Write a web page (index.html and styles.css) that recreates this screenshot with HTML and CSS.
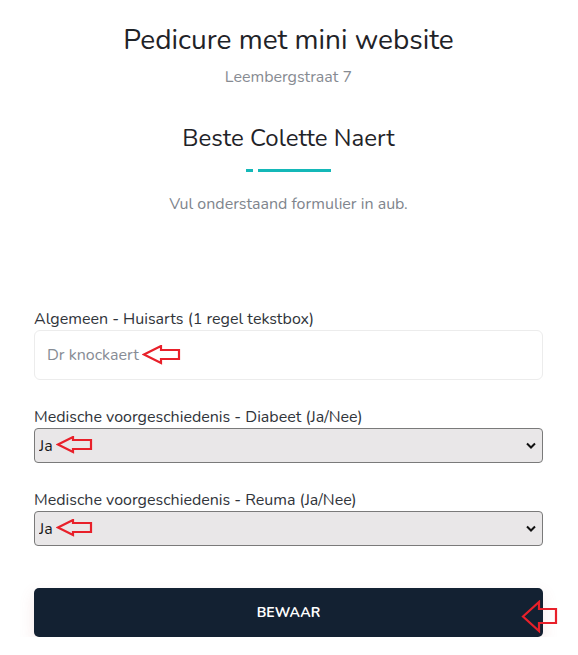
FILE: index.html
```html
<!DOCTYPE html>
<html lang="nl">
<head>
<meta charset="utf-8">
<title>Pedicure met mini website</title>
<link rel="stylesheet" href="styles.css">
</head>
<body>
<div class="page">
  <header class="head">
    <h1 class="title">Pedicure met mini website</h1>
    <p class="address">Leembergstraat 7</p>
    <h2 class="greet">Beste Colette Naert</h2>
    <div class="divider"><span class="dot"></span><span class="bar"></span></div>
    <p class="intro">Vul onderstaand formulier in aub.</p>
  </header>
  <form class="form">
    <div class="group">
      <label class="label" for="huisarts">Algemeen - Huisarts (1 regel tekstbox)</label>
      <div class="field">
        <input class="input" id="huisarts" type="text" placeholder="Dr knockaert">
        <svg class="arrow arrow-input" width="40" height="20" viewBox="0 0 40 20"><path d="M2 9.5 L19 1 L19 5 L37 5 L37 14 L19 14 L19 18 Z" fill="none" stroke="#e8202a" stroke-width="2.2"/></svg>
      </div>
    </div>
    <div class="group">
      <label class="label" for="diabeet">Medische voorgeschiedenis - Diabeet (Ja/Nee)</label>
      <div class="field">
        <select class="select" id="diabeet"><option>Ja</option><option>Nee</option></select>
        <svg class="arrow arrow-select" width="38" height="18" viewBox="0 0 38 18"><path d="M2 8.5 L17 1 L17 4 L35 4 L35 13 L17 13 L17 16 Z" fill="none" stroke="#e8202a" stroke-width="2.2"/></svg>
      </div>
    </div>
    <div class="group">
      <label class="label" for="reuma">Medische voorgeschiedenis - Reuma (Ja/Nee)</label>
      <div class="field">
        <select class="select" id="reuma"><option>Ja</option><option>Nee</option></select>
        <svg class="arrow arrow-select" width="38" height="18" viewBox="0 0 38 18"><path d="M2 8.5 L17 1 L17 4 L35 4 L35 13 L17 13 L17 16 Z" fill="none" stroke="#e8202a" stroke-width="2.2"/></svg>
      </div>
    </div>
    <div class="field submit">
      <button class="button" type="button">BEWAAR</button>
      <svg class="arrow arrow-button" width="38" height="34" viewBox="0 0 38 34"><path d="M2 16.5 L18 2 L18 9 L35 9 L35 23 L18 23 L18 31 Z" fill="none" stroke="#e8202a" stroke-width="2.2"/></svg>
    </div>
  </form>
</div>
</body>
</html>
```
FILE: styles.css
```css
* { box-sizing: border-box; }
html, body { margin: 0; padding: 0; background: #fff; }
body {
  font-family: "Nunito", "Lato", "Open Sans", sans-serif;
  font-size: 16px;
  color: #222;
}
.page {
  padding: 22px 35px 0 34px;
}
.head {
  text-align: center;
}
.title {
  margin: 0;
  font-size: 28px;
  font-weight: 400;
  line-height: 36px;
  color: #1f2328;
}
.address {
  margin: 9px 0 0;
  font-size: 16px;
  line-height: 20px;
  color: #878b92;
}
.greet {
  margin: 36px 0 0;
  font-size: 24px;
  font-weight: 400;
  line-height: 30px;
  color: #1f2328;
}
.divider {
  display: flex;
  justify-content: center;
  gap: 5px;
  margin-top: 16px;
  height: 3px;
}
.divider .dot { width: 7px; height: 3px; background: #14b8b8; }
.divider .bar { width: 73px; height: 3px; background: #14b8b8; }
.intro {
  margin: 22px 0 0;
  font-size: 16px;
  line-height: 20px;
  color: #80858d;
}
.form {
  margin-top: 95px;
}
.group {
  margin-bottom: 27px;
}
.label {
  display: block;
  font-size: 16px;
  line-height: 20px;
  color: #30343a;
  margin-bottom: 1px;
}
.field {
  position: relative;
}
.input {
  display: block;
  width: 100%;
  height: 50px;
  border: 1px solid #ececec;
  border-radius: 6px;
  padding: 0 12px;
  font: inherit;
  font-size: 16px;
  color: #333;
  outline: none;
}
.input::placeholder { color: #878c95; }
.select {
  display: block;
  width: 100%;
  height: 35px;
  appearance: none;
  -webkit-appearance: none;
  background: #e9e7e8 url("data:image/svg+xml;utf8,<svg xmlns='http://www.w3.org/2000/svg' width='10' height='7' viewBox='0 0 10 7'><path d='M1 1.5 L5 5.5 L9 1.5' fill='none' stroke='%23111' stroke-width='2'/></svg>") no-repeat right 6px center;
  border: 1px solid #7a7a7a;
  border-radius: 4px;
  padding: 0 4px;
  font: inherit;
  font-size: 16px;
  color: #1a1a1a;
}
.arrow {
  position: absolute;
  pointer-events: none;
}
.arrow-input { left: 108px; top: 15px; }
.arrow-select { left: 22px; top: 8px; }
.submit {
  margin-top: 42px;
}
.button {
  display: block;
  width: 100%;
  height: 49px;
  border: 0;
  border-radius: 5px;
  background: #132132;
  color: #fff;
  font: inherit;
  font-size: 14px;
  font-weight: 700;
  letter-spacing: 0.1px;
  box-shadow: 0 6px 16px rgba(190, 90, 90, 0.14);
}
.arrow-button { left: 487px; top: 12px; }
```
